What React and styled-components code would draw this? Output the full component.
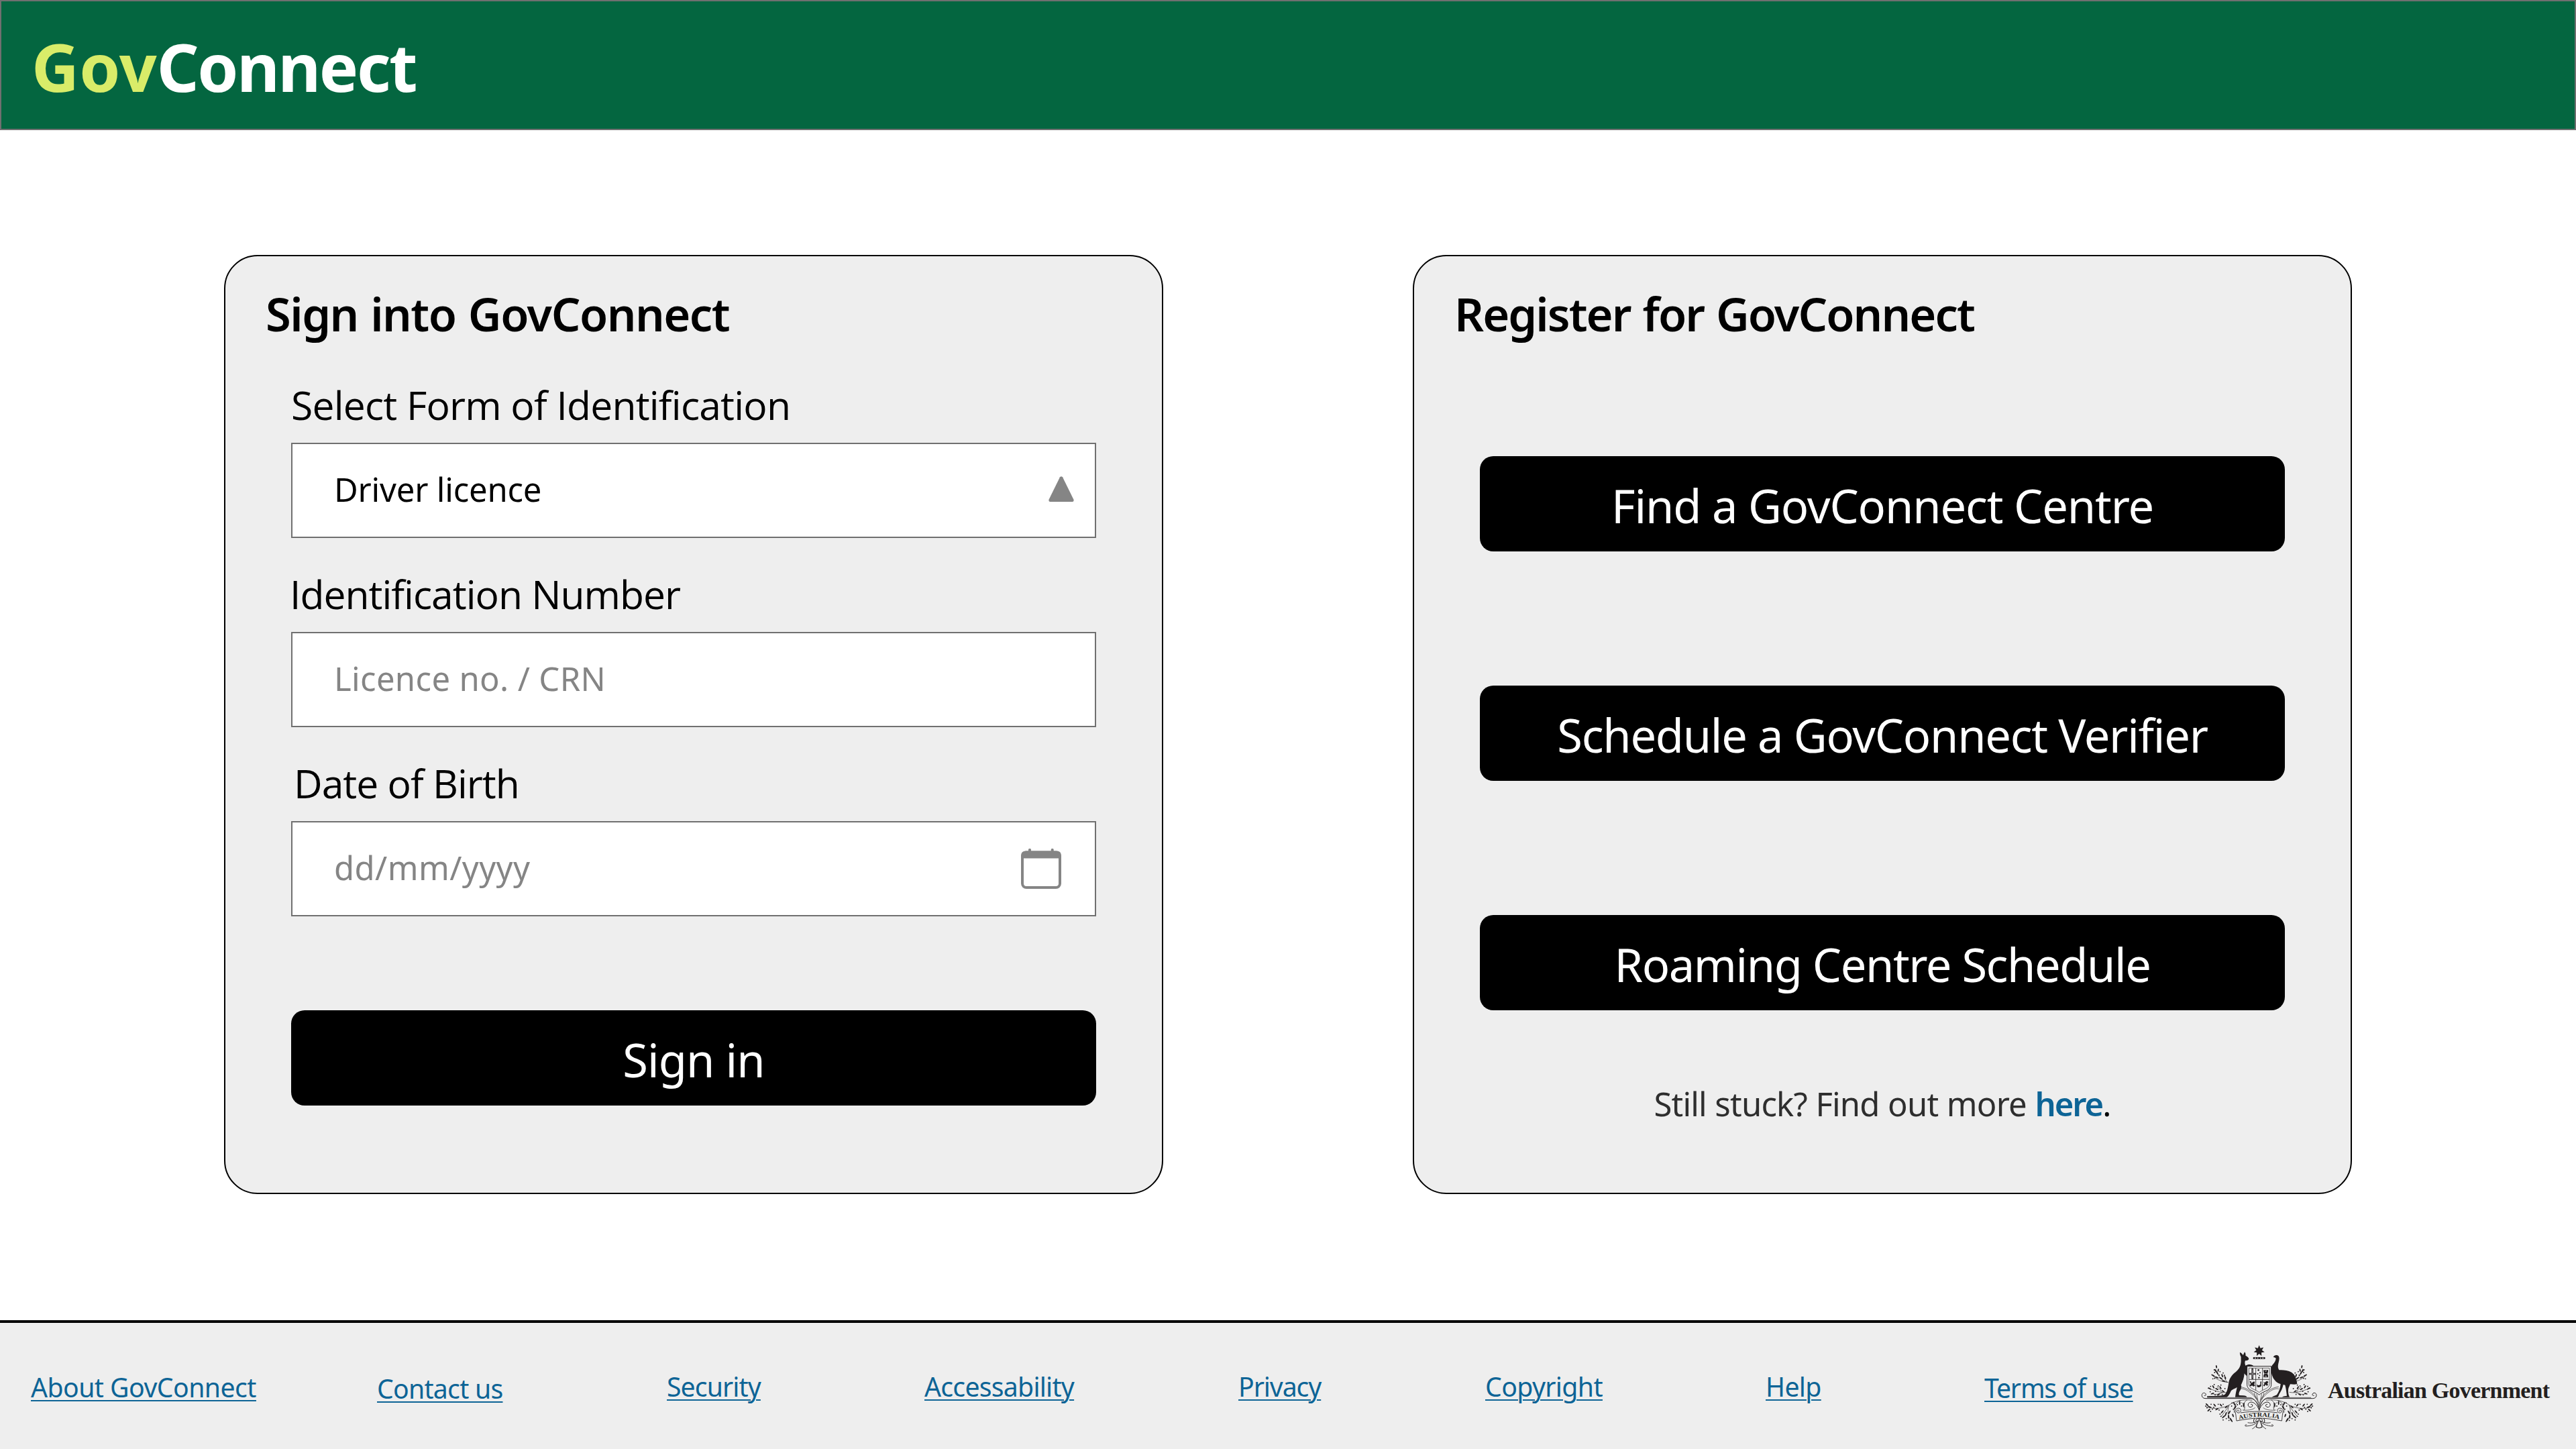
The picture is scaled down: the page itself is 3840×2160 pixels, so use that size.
import React from "react";
import styled, { createGlobalStyle } from "styled-components";

const GlobalStyle = createGlobalStyle`
  *, *::before, *::after { box-sizing: border-box; }
  body { margin: 0; background: #ffffff; font-family: "Noto Sans", sans-serif; }
`;

const Page = styled.div`
  display: flex;
  flex-direction: column;
  width: 3840px;
  height: 2160px;
  overflow: hidden;
`;

const Header = styled.header`
  display: flex;
  align-items: center;
  height: 194px;
  flex: none;
  padding: 4px 0 0 45px;
  background: #046640;
  border: 2px solid #707070;
`;

const Logo = styled.div`
  font-size: 98px;
  line-height: 134px;
  font-weight: 700;
  letter-spacing: -2.4px;
  color: #ffffff;
`;

const LogoAccent = styled.span`
  letter-spacing: 0.2px;
  color: #d9ec69;
`;

const Main = styled.main`
  display: flex;
  flex: 1;
  align-items: flex-start;
  gap: 372px;
  padding: 186px 334px 0;
`;

const Card = styled.section`
  display: flex;
  flex-direction: column;
  width: 1400px;
  height: 1400px;
  padding: 38px 98px 0;
  background: #eeeeee;
  border: 2px solid #000000;
  border-radius: 50px;
`;

const CardTitle = styled.h1`
  margin: 0 0 ${(p) => p.$gap}px -38px;
  font-size: 68.6px;
  line-height: 96px;
  font-weight: 600;
  letter-spacing: ${(p) => p.$track}px;
  word-spacing: 2px;
  white-space: nowrap;
`;

const Form = styled.div`
  display: flex;
  flex-direction: column;
  gap: 43px;
  margin-bottom: 140px;
`;

const Field = styled.div`
  display: flex;
  flex-direction: column;
  gap: 17px;
`;

const Label = styled.label`
  margin-left: ${(p) => p.$indent}px;
  font-family: "Open Sans", sans-serif;
  font-size: 58.8px;
  line-height: 80px;
  letter-spacing: ${(p) => p.$track}px;
  white-space: nowrap;
`;

const Control = styled.div`
  display: flex;
  align-items: center;
  justify-content: space-between;
  height: 142px;
  padding: 0 50px 0 62px;
  background: #ffffff;
  border: 2px solid #707070;
`;

const ControlText = styled.span`
  padding-bottom: 4px;
  font-size: 49px;
  line-height: 68px;
  letter-spacing: ${(p) => p.$track}px;
  color: ${(p) => (p.$placeholder ? "#858585" : "#000000")};
`;

const TriangleIcon = styled.svg`
  width: 38px;
  height: 38px;
  margin: 0 -19px 4px 0;
`;

const CalendarIcon = styled.svg`
  width: 60px;
  height: 60px;
`;

const Button = styled.button`
  display: flex;
  align-items: center;
  justify-content: center;
  flex: none;
  width: 1200px;
  height: 142px;
  padding: 6px 0 0;
  border: 0;
  border-radius: 20px;
  background: #000000;
  color: #ffffff;
  font: 400 68.6px/96px "Noto Sans", sans-serif;
  letter-spacing: ${(p) => p.$track}px;
`;

const ButtonStack = styled.div`
  display: flex;
  flex-direction: column;
  gap: 200px;
`;

const HelpText = styled.p`
  margin: 105px 0 0;
  text-align: center;
  font-size: 49px;
  line-height: 68px;
  letter-spacing: -0.8px;
  word-spacing: 0.5px;
  color: #2e2e2e;
`;

const HelpLink = styled.a`
  color: #0d6496;
  font-weight: 600;
  letter-spacing: -2px;
`;

const Stop = styled.span`
  color: #000000;
`;

const Footer = styled.footer`
  display: grid;
  grid-template-columns: 516px 432px 384px 468px 368px 418px 326px 312px 1fr;
  flex: none;
  height: 192px;
  padding-left: 46px;
  background: #eeeeee;
  border-top: 4px solid #000000;
`;

const FooterLink = styled.a`
  padding-top: ${(p) => p.$top}px;
  font-size: 39.2px;
  line-height: 54px;
  letter-spacing: ${(p) => p.$track}px;
  color: #0d6496;
  white-space: nowrap;
  text-decoration: underline;
  text-decoration-thickness: 2px;
  text-underline-offset: 4px;
`;

const Government = styled.div`
  display: flex;
  align-items: flex-start;
  padding-top: 8px;
`;

const Crest = styled.svg`
  flex: none;
  width: 200px;
  height: 170px;
  margin-left: 0;
`;

const GovernmentName = styled.span`
  padding-top: 73px;
  font: 700 34px/40px "Liberation Serif", serif;
  letter-spacing: -0.78px;
  color: #231f20;
  white-space: nowrap;
`;

const INK = "#231f20";

const starPoints = Array.from({ length: 14 }, (_, i) => {
  const r = i % 2 ? 13 : 25;
  const a = (Math.PI * i) / 7 - Math.PI / 2;
  return `${293 + r * Math.cos(a)},${101 + r * Math.sin(a)}`;
}).join(" ");

// x, y, rotation and length of every wattle leaf on the left half
const leaves = [
  [102, 172, 80, 7], [98, 190, 60, 8], [110, 188, 100, 7], [88, 212, 30, 8], [106, 200, 60, 8],
  [104, 220, 20, 9], [128, 212, 70, 8], [122, 224, 35, 9], [142, 222, 80, 7], [134, 236, 10, 8],
  [72, 270, 30, 8], [88, 262, 60, 8], [104, 272, 30, 8], [120, 266, 60, 8], [84, 292, -20, 8],
  [112, 296, -30, 8], [132, 282, 30, 8],
  [60, 342, 40, 8], [72, 352, 20, 9], [68, 366, -40, 8], [94, 344, 50, 8], [104, 362, -30, 8],
  [122, 344, 50, 8], [128, 374, -50, 9], [146, 352, -40, 8], [144, 384, -70, 10], [134, 396, -40, 9],
  [156, 396, -90, 9], [168, 410, 60, 11], [160, 376, -60, 9], [182, 338, 60, 10], [186, 354, 120, 9],
  [206, 334, 90, 9], [224, 342, 100, 10], [176, 390, 70, 8],
];

const berries = [
  [92, 186], [94, 198], [82, 208], [94, 224], [118, 194], [114, 210], [132, 200], [138, 212], [86, 226],
  [66, 268], [76, 260], [92, 252], [98, 282], [74, 284], [96, 298], [122, 254], [110, 258], [128, 296],
  [140, 270], [54, 348], [60, 356], [78, 340], [84, 362], [90, 354], [76, 372], [110, 340], [114, 366],
  [132, 340], [118, 384], [122, 394], [132, 410], [146, 404], [158, 412], [170, 348], [172, 334],
  [196, 342], [214, 348], [178, 362],
];

function Foliage() {
  return (
    <g>
      <g fill="none" stroke={INK} strokeWidth="2">
        <path d="M154 242C130 238 108 216 98 182M154 242C130 240 104 232 86 212M150 240C140 230 136 218 138 206" />
        <path d="M158 286C130 292 100 282 72 270M130 287C112 296 96 298 82 292M124 284C118 272 112 266 104 262" />
        <path d="M205 272C222 262 262 290 282 318M205 262C236 264 270 288 288 322" />
        <path d="M262 322C220 316 180 326 158 344C120 362 84 362 54 350M158 344C146 366 134 380 122 396M158 344C148 372 156 398 168 414" />
        <path d="M210 322C190 330 178 350 182 378M240 320C226 328 222 340 226 356" />
      </g>
      <g fill={INK}>
        {leaves.map(([x, y, r, l]) => (
          <ellipse key={`${x}-${y}`} cx={x} cy={y} rx={l} ry="3" transform={`rotate(${r} ${x} ${y})`} />
        ))}
        {berries.map(([x, y]) => (
          <circle key={`${x}-${y}`} cx={x} cy={y} r="2.7" />
        ))}
      </g>
      <g fill="none" stroke={INK} strokeWidth="3" strokeLinecap="round">
        <path d="M48 301C54 304 58 296 52 291C44 286 36 292 37 301C38 310 44 314 54 314H258C276 318 290 340 293 366" />
        <path d="M62 310H250C268 310 284 330 293 350" strokeWidth="2" />
        <path d="M293 366C286 342 264 324 250 332C238 340 244 354 256 353C266 351 266 338 257 340" />
        <path d="M282 294C284 314 290 332 293 344M272 290C272 306 284 322 290 334" strokeWidth="2" />
        <path d="M274 356C262 366 240 368 220 366M214 332C228 342 232 352 226 366" strokeWidth="2" />
      </g>
      <g fill="none" stroke={INK} strokeWidth="2.6">
        <path d="M187 378C180 360 204 350 211 364C214 378 196 384 192 372C194 362 206 366 202 373" />
        <path d="M187 378C190 392 190 404 192 414C226 408 260 402 293 402M210 378C236 374 264 372 293 372" />
        <path d="M293 404C282 402 274 410 280 416C288 420 292 410 293 404M286 414C270 426 252 424 242 422" />
        <path d="M290 412C280 430 260 436 232 438C228 434 232 430 238 432M290 414C284 432 272 446 262 450" />
        <path d="M272 404C266 412 268 420 274 424M284 424L280 442L293 446" strokeWidth="3.2" />
      </g>
    </g>
  );
}

function CoatOfArms() {
  return (
    <Crest viewBox="0 0 600 510" aria-hidden="true">
      <Foliage />
      <g transform="translate(586 0) scale(-1 1)">
        <Foliage />
      </g>
      <polygon points={starPoints} fill={INK} />
      <rect x="266" y="129" width="54" height="9" rx="3" fill={INK} />
      <g fill="#eeeeee">
        <ellipse cx="276" cy="133.5" rx="4" ry="2" />
        <ellipse cx="287" cy="133.5" rx="3" ry="2" />
        <ellipse cx="299" cy="133.5" rx="3" ry="2" />
        <ellipse cx="310" cy="133.5" rx="4" ry="2" />
      </g>
      <path
        fill={INK}
        d="M207 108C212 109 218 114 221 121L228 106C233 111 233 118 232 122C239 125 247 131 247 137C246 143 238 144 231 145C228 152 229 160 232 167C243 160 262 160 269 170L264 174C254 170 246 172 241 180L243 216C237 214 230 208 227 202C226 222 219 240 212 254C215 262 212 273 206 281C202 289 201 296 204 300L222 301C232 302 238 304 238 308L186 308C188 290 193 272 194 264C184 270 174 274 168 279C162 291 157 304 148 308L60 308L60 304C90 302 130 304 141 295C150 284 152 270 156 250C158 225 172 208 188 196C202 184 209 172 211 156C213 146 211 134 212 128C208 121 206 114 207 108Z"
      />
      <path
        fill={INK}
        d="M356 129C360 121 370 118 378 122C385 128 383 141 380 153C376 168 376 180 383 187C400 186 421 188 438 197C453 207 461 227 463 249C452 253 441 250 432 250L427 262C422 270 422 285 425 298L429 308L396 308C400 303 410 303 417 302C415 285 413 268 409 254L401 252C398 268 391 282 383 294C380 302 379 306 376 308L350 308C357 303 366 302 372 298C381 285 388 266 389 249C375 246 360 234 353 216C346 200 343 180 351 166C359 156 368 146 368 134C364 130 360 131 356 129Z"
      />
      <path
        d="M239 170H347V254C346 267 336 275 322 281C309 287 300 291 293 298C286 291 277 287 264 281C250 275 240 267 239 254Z"
        fill="#eeeeee"
        stroke={INK}
        strokeWidth="3"
      />
      <path
        d="M247 178H339V252C337 262 329 268 318 273C307 278 299 282 293 287C287 282 279 278 268 273C257 268 249 262 247 252Z"
        fill="none"
        stroke={INK}
        strokeWidth="2"
      />
      <path d="M278 178V277M308 178V277M247 229H339" stroke={INK} strokeWidth="2.4" />
      <path d="M263 180V227M249 204H277" stroke={INK} strokeWidth="8" />
      <path d="M263 184V223M253 204H273" stroke="#eeeeee" strokeWidth="1.6" />
      <path d="M313 186H333V196L329 203L333 210V220H313V210L317 203L313 196Z" fill={INK} />
      <path d="M318 186L323 194L328 186M318 220L323 212L328 220M319 203H327" stroke="#eeeeee" strokeWidth="2" fill="none" />
      <g fill={INK}>
        <circle cx="290" cy="187" r="4" />
        <circle cx="297" cy="199" r="3" />
        <circle cx="287" cy="204" r="3" />
        <circle cx="295" cy="211" r="2.6" />
        <circle cx="292" cy="221" r="3.6" />
        <path d="M251 238C256 234 259 240 259 246C263 242 268 236 274 240L271 252L276 256L268 261L261 256L254 260L250 254L256 250Z" />
        <path d="M282 248C284 256 292 256 298 252C300 246 296 240 301 237C306 240 301 248 303 256C302 264 288 266 284 262Z" />
        <path d="M312 240L318 243L325 237L331 236L334 243L329 247L333 252L328 258L322 252L316 260L311 255L317 249Z" />
      </g>
      <path d="M204 384C262 372 324 372 382 384L388 408C326 394 260 394 198 410Z" fill="#eeeeee" />
      <path id="motto" d="M203 409Q293 383 386 407" fill="none" />
      <text fill={INK} fontFamily="Liberation Serif, serif" fontWeight="700" fontSize="27">
        <textPath href="#motto" textLength="182" lengthAdjust="spacingAndGlyphs">AUSTRALIA</textPath>
      </text>
    </Crest>
  );
}

const links = [
  { text: "About GovConnect", track: -0.55, top: 69 },
  { text: "Contact us", track: -0.75, top: 71 },
  { text: "Security", track: -0.9, top: 68 },
  { text: "Accessability", track: -0.75, top: 68 },
  { text: "Privacy", track: -1.07, top: 68 },
  { text: "Copyright", track: -0.62, top: 68 },
  { text: "Help", track: -0.66, top: 68 },
  { text: "Terms of use", track: -1.15, top: 70 },
];

export default function App() {
  return (
    <Page>
      <GlobalStyle />
      <Header>
        <Logo>
          <LogoAccent>Gov</LogoAccent>Connect
        </Logo>
      </Header>
      <Main>
        <Card>
          <CardTitle $gap={47} $track={-1.5}>Sign into GovConnect</CardTitle>
          <Form>
            <Field>
              <Label $indent={0} $track={-0.8}>Select Form of Identification</Label>
              <Control>
                <ControlText $track={-0.2}>Driver licence</ControlText>
                <TriangleIcon viewBox="0 0 38 38">
                  <path d="M17 1.3Q19 -1 21 1.3L37.6 35Q38 38 35.5 38H2.5Q0 38 .4 35Z" fill="#858585" />
                </TriangleIcon>
              </Control>
            </Field>
            <Field>
              <Label $indent={-2} $track={-1}>Identification Number</Label>
              <Control>
                <ControlText $track={0.35} $placeholder>Licence no. / CRN</ControlText>
              </Control>
            </Field>
            <Field>
              <Label $indent={4} $track={-1}>Date of Birth</Label>
              <Control>
                <ControlText $track={0.4} $placeholder>dd/mm/yyyy</ControlText>
                <CalendarIcon viewBox="0 0 60 60">
                  <path d="M13 1.8V8M46.7 1.8V8" stroke="#858585" strokeWidth="4" strokeLinecap="round" />
                  <rect x="2" y="5.5" width="56" height="52.5" rx="6" fill="none" stroke="#858585" strokeWidth="4" />
                  <path d="M0 14.5V10.5Q0 3.5 7 3.5H53Q60 3.5 60 10.5V14.5Z" fill="#858585" />
                </CalendarIcon>
              </Control>
            </Field>
          </Form>
          <Button $track={-0.9}>Sign in</Button>
        </Card>
        <Card>
          <CardTitle $gap={164} $track={-1.95}>Register for GovConnect</CardTitle>
          <ButtonStack>
            <Button $track={-1.15}>Find a GovConnect Centre</Button>
            <Button $track={-1.3}>Schedule a GovConnect Verifier</Button>
            <Button $track={-1.45}>Roaming Centre Schedule</Button>
          </ButtonStack>
          <HelpText>
            Still stuck? Find out more <HelpLink>here</HelpLink>
            <Stop>.</Stop>
          </HelpText>
        </Card>
      </Main>
      <Footer>
        {links.map((l) => (
          <FooterLink key={l.text} $top={l.top} $track={l.track}>
            {l.text}
          </FooterLink>
        ))}
        <Government>
          <CoatOfArms />
          <GovernmentName>Australian Government</GovernmentName>
        </Government>
      </Footer>
    </Page>
  );
}
